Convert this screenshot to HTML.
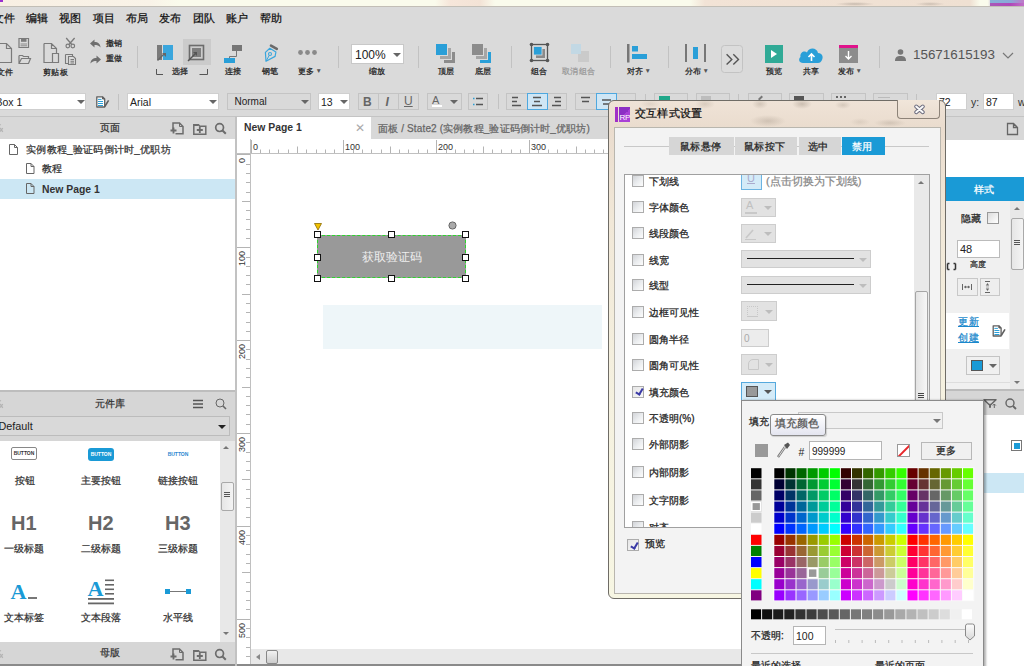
<!DOCTYPE html>
<html><head><meta charset="utf-8"><style>
*{margin:0;padding:0;box-sizing:border-box}
body{width:1024px;height:666px;overflow:hidden;position:relative;background:#dadada;font-family:"Liberation Sans",sans-serif;font-size:12px;color:#333}
.a{position:absolute}
.t{position:absolute;white-space:nowrap;line-height:1;-webkit-text-stroke:0.25px currentColor}
.inp{position:absolute;background:#fff;border:1px solid #cfcfcf}
.btn{position:absolute;border:1px solid #c4c4c4;background:#d9d9d9}
.sep{position:absolute;width:1px;background:#c2c2c2}
.lbl{position:absolute;white-space:nowrap;font-size:8px;letter-spacing:0.45px;line-height:1;color:#222;text-align:center;-webkit-text-stroke:0.25px currentColor}
.dd{position:absolute;width:0;height:0;border-left:4px solid transparent;border-right:4px solid transparent;border-top:4px solid #666}
</style></head><body>
<!-- top strip -->
<div class="a" style="left:0;top:0;width:1024px;height:7px;background:linear-gradient(90deg,#f8efe3 0,#f9f3e8 150px,#fafbec 180px,#fafbec 435px,#f6e6da 450px,#f3e3d6 480px,#fafbec 495px,#fafbec 690px,#f2e3d6 705px,#efe0d2 970px,#fafbec 980px,#fafbec 988px,#a090c8 995px,#9a7cc8 1024px)"></div>
<div class="a" style="left:990px;top:0;width:34px;height:3px;background:linear-gradient(90deg,#88b0d8,#8aa8d8 60%,#c078c8)"></div>
<div class="a" style="left:990px;top:3px;width:34px;height:3px;background:linear-gradient(90deg,#a858b8,#b048b8 60%,#c070c8)"></div>
<div class="a" style="left:835px;top:2px;width:40px;height:4px;background:radial-gradient(ellipse at center,rgba(120,110,100,.35),transparent 70%)"></div>
<div class="a" style="left:915px;top:2px;width:30px;height:4px;background:radial-gradient(ellipse at center,rgba(120,110,100,.3),transparent 70%)"></div>
<div class="a" style="left:0;top:0;width:3px;height:2px;background:#9a2fd0"></div>
<div class="a" style="left:0;top:6px;width:1024px;height:1px;background:#c2beb6"></div>

<!-- menu -->
<div class="t" style="left:-7.2px;top:12.7px;font-size:11px;color:#111">文件</div>
<div class="t" style="left:26.1px;top:12.7px;font-size:11px;color:#111">编辑</div>
<div class="t" style="left:59px;top:12.7px;font-size:11px;color:#111">视图</div>
<div class="t" style="left:92.9px;top:12.7px;font-size:11px;color:#111">项目</div>
<div class="t" style="left:126.1px;top:12.7px;font-size:11px;color:#111">布局</div>
<div class="t" style="left:159.3px;top:12.7px;font-size:11px;color:#111">发布</div>
<div class="t" style="left:193.1px;top:12.7px;font-size:11px;color:#111">团队</div>
<div class="t" style="left:226.1px;top:12.7px;font-size:11px;color:#111">账户</div>
<div class="t" style="left:259.5px;top:12.7px;font-size:11px;color:#111">帮助</div>


<!-- toolbar -->
<svg class="a" style="left:0;top:35px" width="1024" height="53" viewBox="0 35 1024 53">
 <g fill="none" stroke="#7a7a7a" stroke-width="1">
  <!-- file page -->
  <path d="M-3.5 43.5 H6.5 L11.5 48.5 V62.5 H-3.5 Z M6.5 43.5 V48.5 H11.5" stroke-width="1.2"/>
  <!-- save -->
  <path d="M19 38.5 H28.5 V47.5 H19 Z" stroke-width="1.2"/>
  <path d="M21 39 H26.5 V41.8 H21 Z" fill="#7a7a7a" stroke="none"/>
  <path d="M20.5 44 H27 M20.5 45.8 H27" stroke="#8a8a8a" stroke-width="1"/>
  <!-- open -->
  <path d="M19 55.5 H22.5 L23.5 56.5 H28.5 V58.5 M19 55.5 V63.5 H28.5 L30.5 58.5 H21.5 L19 63.5" stroke-width="1.2"/>
  <!-- paste -->
  <path d="M44 43.5 H51.5 L56.5 48.5 V53.5 M51.5 43.5 V48.5 H56.5 M44 43.5 V62.5 H52.5 M52.5 53.5 H58.5 V62.5 H52.5 Z" stroke-width="1.2"/>
  <!-- cut -->
  <circle cx="67.8" cy="46" r="1.8" stroke-width="1.2"/><circle cx="72.8" cy="46" r="1.8" stroke-width="1.2"/>
  <path d="M66.2 38 L71.8 44.5 M74.6 38 L69 44.5" stroke-width="1.3"/>
  <!-- copy -->
  <path d="M65.5 54.5 H72.5 V56.5 M65.5 54.5 V63.5 H68.5 M68.5 56.5 H73.5 L75.5 58.5 V64.5 H68.5 Z M70.5 59.5 H74 M70.5 61.2 H74 M70.5 63 H74" stroke-width="1.1"/>
 </g>
 <!-- undo / redo -->
 <path d="M90 43.5 L94.5 39.5 V42 C98 42 100.5 44 100.5 47.5 C99 45.5 97 45 94.5 45 V47.5 Z" fill="#6f6f6f"/>
 <path d="M101 59.5 L96.5 55.5 V58 C93 58 90.5 60 90.5 63.5 C92 61.5 94 61 96.5 61 V63.5 Z" fill="#6f6f6f"/>
 <!-- select 1 -->
 <rect x="157" y="45" width="5" height="15" fill="#7a7a7a"/>
 <rect x="163" y="45" width="10" height="15" fill="#3aa6dd"/>
 <path d="M157.5 60.5 L164 54" stroke="#666" stroke-width="1.5"/>
 <path d="M162 53 H166 V57 Z" fill="#666"/>
 <!-- select 2 bg -->
 <rect x="183" y="39" width="28" height="26" fill="#cbcbcb"/>
 <rect x="189.5" y="45.5" width="14" height="14" fill="none" stroke="#6c6c6c" stroke-width="1.6"/>
 <rect x="192" y="48" width="9" height="9" fill="#7e7e7e"/>
 <path d="M188 61 L195 54" stroke="#555" stroke-width="1.5"/>
 <path d="M193 52 H197 V56 Z" fill="#555"/>
 <path d="M156.5 69 V74.5 H163 M207.5 69 V74.5 H199.5" fill="none" stroke="#555" stroke-width="1"/>
 <!-- connect -->
 <rect x="232" y="45" width="10" height="6" fill="#767676"/>
 <path d="M236.5 51 V56.5 H229.5 V58" stroke="#767676" stroke-width="1" fill="none"/>
 <rect x="224" y="58" width="11" height="5" fill="#2a9fd8"/>
 <!-- pen -->
 <path d="M271 45.6 L276.8 48.9" stroke="#6a6a6a" stroke-width="2.6" stroke-linecap="round"/>
 <path d="M269.8 48.3 L275.9 52.1 L275.1 56.4 L266 61.3 L265.4 52.4 Z" fill="none" stroke="#3aa6dd" stroke-width="1.2" stroke-linejoin="round"/>
 <circle cx="270" cy="54" r="1.5" fill="none" stroke="#3aa6dd" stroke-width="1.1"/>
 <path d="M266.2 61 L269.2 55.4" stroke="#3aa6dd" stroke-width="1"/>
 <!-- dots -->
 <circle cx="300.5" cy="52.5" r="2.4" fill="#8a8a8a"/><circle cx="307.5" cy="52.5" r="2.4" fill="#8a8a8a"/><circle cx="314.5" cy="52.5" r="2.4" fill="#8a8a8a"/>
 <!-- top layer -->
 <rect x="444" y="52" width="11" height="11" fill="#8c8c8c"/>
 <rect x="439.5" y="47.5" width="12" height="12" fill="#a6a6a6" stroke="#dadada" stroke-width="1"/>
 <rect x="435.5" y="43.5" width="12" height="12" fill="#2a9fd8" stroke="#dadada" stroke-width="1"/>
 <!-- bottom layer -->
 <rect x="480" y="52" width="11" height="11" fill="#2a9fd8"/>
 <rect x="475.5" y="47.5" width="12" height="12" fill="#a6a6a6" stroke="#dadada" stroke-width="1"/>
 <rect x="471.5" y="43.5" width="12" height="12" fill="#8c8c8c" stroke="#dadada" stroke-width="1"/>
 <!-- group -->
 <rect x="531.5" y="44.5" width="16" height="16" fill="none" stroke="#555" stroke-width="1.3"/>
 <rect x="536" y="49" width="9" height="9" fill="#8a8a8a"/>
 <rect x="533.5" y="46.5" width="8.5" height="8.5" fill="#2a9fd8" stroke="#dadada" stroke-width="0.8"/>
 <circle cx="531.5" cy="44.5" r="1.8" fill="#555"/><circle cx="547.5" cy="44.5" r="1.8" fill="#555"/><circle cx="531.5" cy="60.5" r="1.8" fill="#555"/><circle cx="547.5" cy="60.5" r="1.8" fill="#555"/>
 <!-- ungroup -->
 <rect x="578" y="51" width="11" height="11" fill="#cacaca"/>
 <rect x="571" y="44" width="10" height="10" fill="#c2d8e4"/>
 <!-- align -->
 <rect x="627" y="44" width="2.5" height="18.5" fill="#777"/>
 <rect x="632" y="46" width="6" height="5.5" fill="#2a9fd8"/>
 <rect x="632" y="54" width="15" height="5" fill="#2a9fd8"/>
 <!-- distribute -->
 <rect x="685" y="44" width="2" height="18" fill="#777"/>
 <rect x="704" y="44" width="2" height="18" fill="#777"/>
 <rect x="693" y="47" width="5" height="12" fill="#2a9fd8"/>
 <!-- >> -->
 <rect x="721.5" y="45.5" width="21" height="27" rx="3" fill="#dcdcdc" stroke="#c3c3c3"/>
 <path d="M726.6 54.2 L731.8 59.4 L726.6 64.4 M733.3 54.2 L738.5 59.4 L733.3 64.4" fill="none" stroke="#555" stroke-width="1.4"/>
 <!-- preview -->
 <rect x="765" y="45" width="18" height="18" fill="#30aa96"/>
 <path d="M771 50 L777 54 L771 58 Z" fill="#fff"/>
 <!-- share cloud -->
 <path d="M803 63 C799 63 798 59 800.5 57 C799.5 52 805 50 807 52.5 C808.5 47 817 47 818 53 C822.5 53 823.5 57 822 60 C821 62 820 63 818 63 Z" fill="#2a9fd8"/>
 <path d="M811.5 61 V54 M808.5 57 L811.5 54 L814.5 57" fill="none" stroke="#fff" stroke-width="1.6"/>
 <!-- publish -->
 <rect x="839" y="45" width="19" height="3" fill="#e0138c"/>
 <rect x="839" y="48" width="19" height="15" fill="#8c8c8c"/>
 <path d="M848.5 51 V59 M845.5 56 L848.5 59 L851.5 56" fill="none" stroke="#fff" stroke-width="1.4"/>
 <!-- user -->
 <circle cx="900.5" cy="52" r="2.8" fill="#777"/>
 <path d="M895 61 C895 57 897 56 900.5 56 C904 56 906 57 906 61 Z" fill="#777"/>
 <path d="M1003 53 L1008 58 L1013 53" fill="none" stroke="#777" stroke-width="1.2"/>
</svg>
<div class="sep" style="left:137px;top:46px;height:22px"></div>
<div class="sep" style="left:338px;top:46px;height:22px"></div>
<div class="sep" style="left:418px;top:46px;height:22px"></div>
<div class="sep" style="left:511px;top:46px;height:22px"></div>
<div class="sep" style="left:610px;top:46px;height:22px"></div>
<div class="sep" style="left:668px;top:46px;height:22px"></div>
<div class="sep" style="left:879px;top:46px;height:22px"></div>
<div class="lbl" style="left:-3.5px;top:68.7px">文件</div>
<div class="lbl" style="left:42.7px;top:68.7px">剪贴板</div>
<div class="lbl" style="left:105.5px;top:39.8px">撤销</div>
<div class="lbl" style="left:105.5px;top:55.3px">重做</div>
<div class="lbl" style="left:172px;top:67.5px">选择</div>
<div class="lbl" style="left:225px;top:67.5px">连接</div>
<div class="lbl" style="left:262px;top:67.5px">钢笔</div>
<div class="lbl" style="left:298px;top:67.5px">更多<span style="font-size:6.5px;-webkit-text-stroke:0;color:#555;margin-left:0.5px;position:relative;top:-0.5px">▼</span></div>
<div class="inp" style="left:351px;top:44px;width:53px;height:20px;border-color:#c8c8c8"></div>
<div class="t" style="left:355px;top:49px;font-size:12px;color:#222;-webkit-text-stroke:0">100%</div>
<div class="dd" style="left:393px;top:53px"></div>
<div class="lbl" style="left:369px;top:67.5px">缩放</div>
<div class="lbl" style="left:438px;top:67.5px">顶层</div>
<div class="lbl" style="left:475px;top:67.5px">底层</div>
<div class="lbl" style="left:531px;top:67.5px">组合</div>
<div class="lbl" style="left:562px;top:68px;color:#999">取消组合</div>
<div class="lbl" style="left:627px;top:67.5px">对齐<span style="font-size:6.5px;-webkit-text-stroke:0;color:#555;margin-left:0.5px;position:relative;top:-0.5px">▼</span></div>
<div class="lbl" style="left:685px;top:67.5px">分布<span style="font-size:6.5px;-webkit-text-stroke:0;color:#555;margin-left:0.5px;position:relative;top:-0.5px">▼</span></div>
<div class="lbl" style="left:766px;top:67.5px">预览</div>
<div class="lbl" style="left:803px;top:67.5px">共享</div>
<div class="lbl" style="left:838px;top:67.5px">发布<span style="font-size:6.5px;-webkit-text-stroke:0;color:#555;margin-left:0.5px;position:relative;top:-0.5px">▼</span></div>
<div class="t" style="left:913px;top:48px;font-size:13.4px;color:#555;-webkit-text-stroke:0">15671615193</div>



<svg class="a" style="left:94px;top:94px" width="18" height="16" viewBox="94 94 18 16">
 <path d="M96.8 96.8 H102.5 L104.7 99 V107 H96.8 Z" fill="#fff" stroke="#5f5f5f" stroke-width="1.3" stroke-linejoin="round"/>
 <path d="M102.5 96.8 V99 H104.7" fill="#5f5f5f" stroke="#5f5f5f" stroke-width="1"/>
 <path d="M98 99.4 H101.5 M98 101.5 H103 M98 103.5 H103 M98 105.5 H103" stroke="#2a9fd8" stroke-width="1"/>
 <path d="M104.8 106.5 L108.6 100.3" stroke="#5f5f5f" stroke-width="1.6"/>
</svg>
<div class="sep" style="left:118px;top:94px;height:16px"></div>

<!-- format buttons -->
<div class="btn" style="left:358px;top:93px;width:61px;height:17px;background:#d9d9d9"></div>
<div class="a" style="left:378px;top:94px;width:1px;height:15px;background:#c4c4c4"></div>
<div class="a" style="left:398px;top:94px;width:1px;height:15px;background:#c4c4c4"></div>
<div class="t" style="left:363px;top:96px;font-size:12px;color:#666;font-weight:bold;-webkit-text-stroke:0">B</div>
<div class="t" style="left:385.5px;top:96px;font-size:12px;color:#666;font-style:italic;font-weight:bold;-webkit-text-stroke:0">I</div>
<div class="t" style="left:404px;top:95px;font-size:12px;color:#666;text-decoration:underline;-webkit-text-stroke:0">U</div>
<div class="btn" style="left:427px;top:93px;width:35px;height:17px"></div>
<div class="t" style="left:432px;top:95px;font-size:11px;color:#666;-webkit-text-stroke:0">A</div>
<div class="a" style="left:432px;top:105px;width:10px;height:2px;background:#fff"></div>
<div class="dd" style="left:450px;top:100px"></div>
<div class="btn" style="left:468px;top:93px;width:20px;height:17px"></div>
<svg class="a" style="left:468px;top:93px" width="20" height="17"><path d="M5 5.5 H6.5 M5 11.5 H6.5" stroke="#2a9fd8" stroke-width="1.6"/><path d="M8 5.5 H15 M8 11.5 H15" stroke="#555" stroke-width="1.4"/></svg>
<div class="sep" style="left:498px;top:94px;height:15px"></div>
<div class="btn" style="left:506px;top:93px;width:61px;height:17px"></div>
<div class="a" style="left:527px;top:93px;width:21px;height:17px;background:#cfe6f5;border:1px solid #4fa8df"></div>
<svg class="a" style="left:506px;top:93px" width="62" height="17">
 <path d="M6 4.5 H12 M6 8.5 H11 M6 12.5 H15" stroke="#555" stroke-width="1.3"/>
 <path d="M27 4.5 H35 M28 8.5 H34 M26 12.5 H36" stroke="#555" stroke-width="1.3"/>
 <path d="M48 4.5 H55 M49 8.5 H55 M46 12.5 H55" stroke="#555" stroke-width="1.3"/>
</svg>
<div class="btn" style="left:575px;top:93px;width:61px;height:17px"></div>
<div class="a" style="left:596px;top:93px;width:21px;height:17px;background:#cfe6f5;border:1px solid #4fa8df"></div>
<svg class="a" style="left:575px;top:93px" width="62" height="17">
 <path d="M6 4.5 H15 M7 8.5 H14" stroke="#555" stroke-width="1.3"/>
 <path d="M27 7 H36 M28 11 H35" stroke="#555" stroke-width="1.3"/>
</svg>
<div class="sep" style="left:645px;top:94px;height:15px"></div>
<div class="btn" style="left:654px;top:93px;width:34px;height:17px"></div>
<div class="a" style="left:659px;top:96px;width:11px;height:8px;background:#20a88a"></div>
<div class="btn" style="left:696px;top:93px;width:34px;height:17px"></div>
<div class="a" style="left:701px;top:96px;width:10px;height:8px;background:#bdbdbd"></div>
<div class="sep" style="left:738px;top:94px;height:15px"></div>
<div class="btn" style="left:748px;top:93px;width:34px;height:17px"></div>
<div class="a" style="left:758px;top:97px;width:5px;height:2px;background:#777;transform:rotate(-45deg)"></div>
<div class="btn" style="left:789px;top:93px;width:35px;height:17px"></div>
<div class="a" style="left:794px;top:96px;width:10px;height:5px;background:#555"></div>
<div class="btn" style="left:831px;top:93px;width:35px;height:17px"></div>
<div class="a" style="left:836px;top:96px;width:2px;height:2px;background:#666;box-shadow:4px 0 0 #666,8px 0 0 #666"></div>
<div class="btn" style="left:873px;top:93px;width:35px;height:17px"></div>
<div class="a" style="left:878px;top:97px;width:12px;height:1px;background:#bbb"></div>
<div class="sep" style="left:916px;top:94px;height:15px"></div>

<!-- toolbar line bottom -->
<div class="inp" style="left:936px;top:93px;width:31px;height:17px"></div>
<div class="t" style="left:939px;top:97px;font-size:10.5px;color:#222;-webkit-text-stroke:0">72</div>
<div class="t" style="left:971px;top:97px;font-size:10.5px;color:#333;-webkit-text-stroke:0">y:</div>
<div class="inp" style="left:983px;top:93px;width:31px;height:17px"></div>
<div class="t" style="left:986px;top:97px;font-size:10.5px;color:#222;-webkit-text-stroke:0">87</div>
<div class="t" style="left:1018px;top:97px;font-size:10.5px;color:#333;-webkit-text-stroke:0">w</div>


<div class="a" style="left:0;top:116px;width:1024px;height:1px;background:#c4c4c4"></div>

<!-- format bar -->
<div class="inp" style="left:-2px;top:93px;width:88px;height:17px"></div>
<div class="t" style="left:-4.5px;top:96.5px;font-size:10.5px;color:#222;-webkit-text-stroke:0">Box 1</div>
<div class="dd" style="left:77px;top:100px"></div>
<div class="inp" style="left:127px;top:93px;width:92px;height:17px"></div>
<div class="t" style="left:130px;top:96.5px;font-size:10.5px;color:#222;-webkit-text-stroke:0">Arial</div>
<div class="dd" style="left:209px;top:100px"></div>
<div class="btn" style="left:227px;top:93px;width:84px;height:17px"></div>
<div class="t" style="left:234.5px;top:96.5px;font-size:10px;color:#222;-webkit-text-stroke:0">Normal</div>
<div class="dd" style="left:301px;top:100px"></div>
<div class="inp" style="left:318px;top:93px;width:32px;height:17px"></div>
<div class="t" style="left:321px;top:96.5px;font-size:10.5px;color:#222;-webkit-text-stroke:0">13</div>
<div class="dd" style="left:340px;top:100px"></div>



<!-- CANVAS -->
<div class="a" style="left:237px;top:117px;width:709px;height:22px;background:#d8d8d8"></div>
<div class="a" style="left:236px;top:117px;width:135px;height:23px;background:#fff"></div>
<div class="t" style="left:244px;top:123px;font-size:10.4px;color:#333;font-weight:bold;-webkit-text-stroke:0">New Page 1</div>
<div class="t" style="left:355px;top:122px;font-size:12px;color:#aaa;-webkit-text-stroke:0">✕</div>
<div class="t" style="left:378px;top:124px;font-size:10px;color:#666;letter-spacing:0.14px">面板 / State2 (实例教程_验证码倒计时_优职坊)</div>
<div class="a" style="left:236px;top:139px;width:710px;height:525px;background:#fff"></div>
<svg class="a" style="left:0;top:0" width="946" height="666" viewBox="0 0 946 666">
 <path d="M250.5 139 V153 M236 153.5 H946 M250.5 153 V664" stroke="#c0c0c0" fill="none"/>
 <path d="M246 656.5 H250" stroke="#b4b4b4"/>
 <path d="M251.5 140 V153" stroke="#b4b4b4"/>
 <text x="253" y="149.5" font-size="9" fill="#333" font-family="Liberation Sans">0</text>
 <path d="M260.5 149.5 V153" stroke="#b4b4b4"/>
 <path d="M269.5 149.5 V153" stroke="#b4b4b4"/>
 <path d="M278.5 149.5 V153" stroke="#b4b4b4"/>
 <path d="M288.5 149.5 V153" stroke="#b4b4b4"/>
 <path d="M297.5 146.5 V153" stroke="#b4b4b4"/>
 <path d="M306.5 149.5 V153" stroke="#b4b4b4"/>
 <path d="M316.5 149.5 V153" stroke="#b4b4b4"/>
 <path d="M325.5 149.5 V153" stroke="#b4b4b4"/>
 <path d="M334.5 149.5 V153" stroke="#b4b4b4"/>
 <path d="M343.5 140 V153" stroke="#b4b4b4"/>
 <text x="345" y="149.5" font-size="9" fill="#333" font-family="Liberation Sans">100</text>
 <path d="M353.5 149.5 V153" stroke="#b4b4b4"/>
 <path d="M362.5 149.5 V153" stroke="#b4b4b4"/>
 <path d="M371.5 149.5 V153" stroke="#b4b4b4"/>
 <path d="M381.5 149.5 V153" stroke="#b4b4b4"/>
 <path d="M390.5 146.5 V153" stroke="#b4b4b4"/>
 <path d="M399.5 149.5 V153" stroke="#b4b4b4"/>
 <path d="M408.5 149.5 V153" stroke="#b4b4b4"/>
 <path d="M418.5 149.5 V153" stroke="#b4b4b4"/>
 <path d="M427.5 149.5 V153" stroke="#b4b4b4"/>
 <path d="M436.5 140 V153" stroke="#b4b4b4"/>
 <text x="438" y="149.5" font-size="9" fill="#333" font-family="Liberation Sans">200</text>
 <path d="M446.5 149.5 V153" stroke="#b4b4b4"/>
 <path d="M455.5 149.5 V153" stroke="#b4b4b4"/>
 <path d="M464.5 149.5 V153" stroke="#b4b4b4"/>
 <path d="M473.5 149.5 V153" stroke="#b4b4b4"/>
 <path d="M483.5 146.5 V153" stroke="#b4b4b4"/>
 <path d="M492.5 149.5 V153" stroke="#b4b4b4"/>
 <path d="M501.5 149.5 V153" stroke="#b4b4b4"/>
 <path d="M511.5 149.5 V153" stroke="#b4b4b4"/>
 <path d="M520.5 149.5 V153" stroke="#b4b4b4"/>
 <path d="M529.5 140 V153" stroke="#b4b4b4"/>
 <text x="531" y="149.5" font-size="9" fill="#333" font-family="Liberation Sans">300</text>
 <path d="M538.5 149.5 V153" stroke="#b4b4b4"/>
 <path d="M548.5 149.5 V153" stroke="#b4b4b4"/>
 <path d="M557.5 149.5 V153" stroke="#b4b4b4"/>
 <path d="M566.5 149.5 V153" stroke="#b4b4b4"/>
 <path d="M576.5 146.5 V153" stroke="#b4b4b4"/>
 <path d="M585.5 149.5 V153" stroke="#b4b4b4"/>
 <path d="M594.5 149.5 V153" stroke="#b4b4b4"/>
 <path d="M603.5 149.5 V153" stroke="#b4b4b4"/>
 <path d="M236 154.5 H250" stroke="#b4b4b4"/>
 <text transform="translate(245,158) rotate(-90)" text-anchor="end" font-size="9" fill="#333" font-family="Liberation Sans">0</text>
 <path d="M246 164.5 H250" stroke="#b4b4b4"/>
 <path d="M246 173.5 H250" stroke="#b4b4b4"/>
 <path d="M246 182.5 H250" stroke="#b4b4b4"/>
 <path d="M246 192.5 H250" stroke="#b4b4b4"/>
 <path d="M242 201.5 H250" stroke="#b4b4b4"/>
 <path d="M246 210.5 H250" stroke="#b4b4b4"/>
 <path d="M246 219.5 H250" stroke="#b4b4b4"/>
 <path d="M246 229.5 H250" stroke="#b4b4b4"/>
 <path d="M246 238.5 H250" stroke="#b4b4b4"/>
 <path d="M236 247.5 H250" stroke="#b4b4b4"/>
 <text transform="translate(245,251) rotate(-90)" text-anchor="end" font-size="9" fill="#333" font-family="Liberation Sans">100</text>
 <path d="M246 257.5 H250" stroke="#b4b4b4"/>
 <path d="M246 266.5 H250" stroke="#b4b4b4"/>
 <path d="M246 275.5 H250" stroke="#b4b4b4"/>
 <path d="M246 284.5 H250" stroke="#b4b4b4"/>
 <path d="M242 294.5 H250" stroke="#b4b4b4"/>
 <path d="M246 303.5 H250" stroke="#b4b4b4"/>
 <path d="M246 312.5 H250" stroke="#b4b4b4"/>
 <path d="M246 322.5 H250" stroke="#b4b4b4"/>
 <path d="M246 331.5 H250" stroke="#b4b4b4"/>
 <path d="M236 340.5 H250" stroke="#b4b4b4"/>
 <text transform="translate(245,344) rotate(-90)" text-anchor="end" font-size="9" fill="#333" font-family="Liberation Sans">200</text>
 <path d="M246 349.5 H250" stroke="#b4b4b4"/>
 <path d="M246 359.5 H250" stroke="#b4b4b4"/>
 <path d="M246 368.5 H250" stroke="#b4b4b4"/>
 <path d="M246 377.5 H250" stroke="#b4b4b4"/>
 <path d="M242 387.5 H250" stroke="#b4b4b4"/>
 <path d="M246 396.5 H250" stroke="#b4b4b4"/>
 <path d="M246 405.5 H250" stroke="#b4b4b4"/>
 <path d="M246 414.5 H250" stroke="#b4b4b4"/>
 <path d="M246 424.5 H250" stroke="#b4b4b4"/>
 <path d="M236 433.5 H250" stroke="#b4b4b4"/>
 <text transform="translate(245,437) rotate(-90)" text-anchor="end" font-size="9" fill="#333" font-family="Liberation Sans">300</text>
 <path d="M246 442.5 H250" stroke="#b4b4b4"/>
 <path d="M246 452.5 H250" stroke="#b4b4b4"/>
 <path d="M246 461.5 H250" stroke="#b4b4b4"/>
 <path d="M246 470.5 H250" stroke="#b4b4b4"/>
 <path d="M242 479.5 H250" stroke="#b4b4b4"/>
 <path d="M246 489.5 H250" stroke="#b4b4b4"/>
 <path d="M246 498.5 H250" stroke="#b4b4b4"/>
 <path d="M246 507.5 H250" stroke="#b4b4b4"/>
 <path d="M246 517.5 H250" stroke="#b4b4b4"/>
 <path d="M236 526.5 H250" stroke="#b4b4b4"/>
 <text transform="translate(245,530) rotate(-90)" text-anchor="end" font-size="9" fill="#333" font-family="Liberation Sans">400</text>
 <path d="M246 535.5 H250" stroke="#b4b4b4"/>
 <path d="M246 544.5 H250" stroke="#b4b4b4"/>
 <path d="M246 554.5 H250" stroke="#b4b4b4"/>
 <path d="M246 563.5 H250" stroke="#b4b4b4"/>
 <path d="M242 572.5 H250" stroke="#b4b4b4"/>
 <path d="M246 582.5 H250" stroke="#b4b4b4"/>
 <path d="M246 591.5 H250" stroke="#b4b4b4"/>
 <path d="M246 600.5 H250" stroke="#b4b4b4"/>
 <path d="M246 609.5 H250" stroke="#b4b4b4"/>
 <path d="M236 619.5 H250" stroke="#b4b4b4"/>
 <text transform="translate(245,623) rotate(-90)" text-anchor="end" font-size="9" fill="#333" font-family="Liberation Sans">500</text>
 <path d="M246 628.5 H250" stroke="#b4b4b4"/>
 <path d="M246 637.5 H250" stroke="#b4b4b4"/>
 <path d="M246 647.5 H250" stroke="#b4b4b4"/>
</svg>
<div class="a" style="left:323px;top:305px;width:279px;height:44px;background:#eef6f9"></div>
<div class="a" style="left:317px;top:235px;width:149px;height:43px;background:#999;border:1px dashed #2bd62b"></div>
<div class="t" style="left:362px;top:251px;font-size:12px;color:#eee;-webkit-text-stroke:0">获取验证码</div>
<svg class="a" style="left:300px;top:215px" width="180" height="75" viewBox="300 215 180 75">
 <g fill="#fff" stroke="#111" stroke-width="1">
  <rect x="314.5" y="231.5" width="6" height="6"/><rect x="388.5" y="231.5" width="6" height="6"/><rect x="462.5" y="231.5" width="6" height="6"/>
  <rect x="314.5" y="254.5" width="6" height="6"/><rect x="462.5" y="254.5" width="6" height="6"/>
  <rect x="314.5" y="275.5" width="6" height="6"/><rect x="388.5" y="275.5" width="6" height="6"/><rect x="462.5" y="275.5" width="6" height="6"/>
 </g>
 <path d="M314.5 223.5 H321.5 L318 230 Z" fill="#f2c200" stroke="#8a6a00" stroke-width="0.8"/>
 <circle cx="452.5" cy="225.5" r="3.6" fill="#aaa" stroke="#666" stroke-width="1"/>
</svg>
<div class="a" style="left:251px;top:649px;width:695px;height:15px;background:#e8e8e8"></div>
<div class="a" style="left:256px;top:654px;width:0;height:0;border-top:3px solid transparent;border-bottom:3px solid transparent;border-right:4px solid #888"></div>
<div class="a" style="left:266px;top:650px;width:12px;height:14px;border:1px solid #888;border-radius:2px;background:linear-gradient(#f2f2f2,#ccc)"></div>

<!-- LEFT PANEL -->
<div class="a" style="left:0;top:117px;width:235px;height:22.5px;background:#d8d8d8"></div>
<div class="t" style="left:100px;top:123px;font-size:10px;color:#333">页面</div>
<div class="a" style="left:0;top:139px;width:235px;height:252px;background:#fff"></div>
<div class="a" style="left:0;top:179px;width:235px;height:20px;background:#cce7f4"></div>
<svg class="a" style="left:0;top:116px" width="236" height="90" viewBox="0 116 236 90">
 <g transform="translate(0,0)" fill="none" stroke="#6c6c6c" stroke-width="1.5">
  <path d="M173 131 V123 H179.5 L183 126.5 V133.8 H175.5"/>
  <path d="M179.5 123 V126.5 H183" stroke-width="1"/>
  <path d="M170.5 130.5 H176.5 M173.5 127.5 V133.5" stroke-width="1.8"/>
  <path d="M193.8 124.8 H198.5 L199.8 126.2 H205.8 V134.2 H193.8 Z"/>
  <path d="M193.8 125 H198.5" stroke-width="2"/>
  <path d="M196.8 130 H202.8 M199.8 127 V133" stroke-width="1.8"/>
  <circle cx="219.6" cy="127.6" r="3.9" stroke-width="1.7"/><path d="M222.5 130.5 L225.8 133.8" stroke-width="2"/>
 </g>
 <g fill="none" stroke="#666" stroke-width="1">
  <path d="M9.5 144.5 H14.5 L17.5 147.5 V154.5 H9.5 Z M14.5 144.5 V147.5 H17.5" />
  <path d="M26.5 163.5 H31 L34 166.5 V173.5 H26.5 Z M31 163.5 V166.5 H34" />
  <path d="M26.5 183.5 H31 L34 186.5 V193.5 H26.5 Z M31 183.5 V186.5 H34" />
 </g>
</svg>
<div class="t" style="left:26px;top:145px;font-size:10px;color:#333;letter-spacing:0.25px">实例教程_验证码倒计时_优职坊</div>
<div class="t" style="left:42px;top:164px;font-size:10px;color:#333;letter-spacing:0.25px">教程</div>
<div class="t" style="left:42px;top:185px;font-size:10.4px;color:#333;font-weight:bold;-webkit-text-stroke:0">New Page 1</div>
<div class="a" style="left:0;top:390px;width:236px;height:2px;background:#bdbdbd"></div>
<div class="a" style="left:0;top:392px;width:235px;height:49px;background:#d6d6d6"></div>
<div class="t" style="left:95px;top:399px;font-size:10px;color:#333">元件库</div>
<svg class="a" style="left:190px;top:396px" width="40" height="16">
 <path d="M3 4.5 H13 M3 8 H13 M3 11.5 H13" stroke="#555" stroke-width="1.4"/>
 <circle cx="30" cy="7" r="4" fill="none" stroke="#666"/><path d="M33 10 L36 13" stroke="#666" stroke-width="1.6"/>
</svg>
<div class="a" style="left:-1px;top:416px;width:231px;height:20px;background:#d9d9d9;border:1px solid #bcbcbc"></div>
<div class="t" style="left:-1.5px;top:421px;font-size:10.8px;color:#222;-webkit-text-stroke:0">Default</div>
<div class="a" style="left:218px;top:425px;width:0;height:0;border-left:4px solid transparent;border-right:4px solid transparent;border-top:4px solid #222"></div>
<div class="a" style="left:0;top:441px;width:220px;height:201px;background:#fff"></div>
<div class="a" style="left:220px;top:441px;width:15px;height:201px;background:#e8e8e8"></div>
<div class="a" style="left:223px;top:446px;width:0;height:0;border-left:3px solid transparent;border-right:3px solid transparent;border-bottom:3px solid #777"></div>
<div class="a" style="left:223px;top:632px;width:0;height:0;border-left:3px solid transparent;border-right:3px solid transparent;border-top:3px solid #777"></div>
<div class="a" style="left:221px;top:482px;width:13px;height:29px;background:linear-gradient(90deg,#e6e6e6,#f4f4f4);border:1px solid #a9a9a9;border-radius:2px"></div>
<div class="a" style="left:224px;top:492px;width:6px;height:1px;background:#555;box-shadow:0 2px 0 #555,0 4px 0 #555"></div>
<!-- widgets -->
<div class="a" style="left:11px;top:447px;width:26px;height:13px;border:1px solid #888;border-radius:2px;background:#fff;font-size:5px;line-height:11px;text-align:center;color:#333;font-weight:bold">BUTTON</div>
<div class="a" style="left:88px;top:448px;width:26px;height:13px;border-radius:3px;background:#1a9ad6;font-size:5px;line-height:13px;text-align:center;color:#fff;font-weight:bold">BUTTON</div>
<div class="a" style="left:165px;top:448px;width:26px;height:13px;font-size:5px;line-height:13px;text-align:center;color:#2a87d0;font-weight:bold">BUTTON</div>
<div class="t" style="left:15px;top:475.5px;font-size:10px;color:#333">按钮</div>
<div class="t" style="left:81px;top:475.5px;font-size:10px;color:#333">主要按钮</div>
<div class="t" style="left:158px;top:475.5px;font-size:10px;color:#333">链接按钮</div>
<div class="t" style="left:11px;top:513px;font-size:20px;color:#666;font-weight:bold;-webkit-text-stroke:0">H1</div>
<div class="t" style="left:88px;top:513px;font-size:20px;color:#666;font-weight:bold;-webkit-text-stroke:0">H2</div>
<div class="t" style="left:165px;top:513px;font-size:20px;color:#666;font-weight:bold;-webkit-text-stroke:0">H3</div>
<div class="t" style="left:4px;top:544px;font-size:10px;color:#333">一级标题</div>
<div class="t" style="left:81px;top:544px;font-size:10px;color:#333">二级标题</div>
<div class="t" style="left:158px;top:544px;font-size:10px;color:#333">三级标题</div>
<svg class="a" style="left:0;top:575px" width="220" height="35" viewBox="0 575 220 35">
 <text x="10.6" y="599" font-family="Liberation Serif" font-weight="bold" font-size="21" fill="#1a9ad6" textLength="16" lengthAdjust="spacingAndGlyphs">A</text>
 <rect x="28" y="597" width="9" height="2" fill="#777"/>
 <text x="87.6" y="595.5" font-family="Liberation Serif" font-weight="bold" font-size="20" fill="#1a9ad6" textLength="16" lengthAdjust="spacingAndGlyphs">A</text>
 <rect x="105" y="579.5" width="9" height="1.6" fill="#666"/><rect x="105" y="584" width="9" height="1.6" fill="#666"/><rect x="105" y="588.5" width="9" height="1.6" fill="#666"/><rect x="105" y="593" width="9" height="1.6" fill="#666"/>
 <rect x="88" y="598" width="26" height="1.8" fill="#666"/><rect x="88" y="602.5" width="26" height="1.8" fill="#666"/>
 <rect x="165" y="589" width="5" height="5" fill="#1a9ad6"/><rect x="186" y="589" width="5" height="5" fill="#1a9ad6"/>
 <rect x="170" y="591" width="16" height="1" fill="#777"/>
</svg>
<div class="t" style="left:4px;top:613px;font-size:10px;color:#333">文本标签</div>
<div class="t" style="left:81px;top:613px;font-size:10px;color:#333">文本段落</div>
<div class="t" style="left:163px;top:613px;font-size:10px;color:#333">水平线</div>
<div class="a" style="left:0;top:642px;width:235px;height:22px;background:#d6d6d6"></div>
<div class="t" style="left:100px;top:648px;font-size:10px;color:#333">母版</div>
<svg class="a" style="left:0;top:642px" width="236" height="22" viewBox="0 642 236 22">
 <g transform="translate(0,526)" fill="none" stroke="#6c6c6c" stroke-width="1.5">
  <path d="M173 131 V123 H179.5 L183 126.5 V133.8 H175.5"/>
  <path d="M179.5 123 V126.5 H183" stroke-width="1"/>
  <path d="M170.5 130.5 H176.5 M173.5 127.5 V133.5" stroke-width="1.8"/>
  <path d="M193.8 124.8 H198.5 L199.8 126.2 H205.8 V134.2 H193.8 Z"/>
  <path d="M193.8 125 H198.5" stroke-width="2"/>
  <path d="M196.8 130 H202.8 M199.8 127 V133" stroke-width="1.8"/>
  <circle cx="219.6" cy="127.6" r="3.9" stroke-width="1.7"/><path d="M222.5 130.5 L225.8 133.8" stroke-width="2"/>
 </g>
</svg>
<div class="a" style="left:0;top:664px;width:1024px;height:2px;background:#8a8a8a"></div>
<div class="a" style="left:235px;top:116px;width:2px;height:550px;background:#c2c2c2"></div>



<svg class="a" style="left:0;top:0" width="6" height="666" viewBox="0 0 6 666">
 <path d="M0 124.5 L0.8 125 M0 131.5 L2.8 128.2 M0 128 L2.8 131.8" stroke="#b4b4b4" stroke-width="1.3" fill="none"/>
 <path d="M0 400.5 L1 401 M0 407.5 L2.8 404.2 M0 404 L2.8 407.8" stroke="#b4b4b4" stroke-width="1.3" fill="none"/>
 <path d="M0 650.5 L1 651 M0 657.5 L2.8 654.2 M0 654 L2.8 657.8" stroke="#b4b4b4" stroke-width="1.3" fill="none"/>
</svg>
<!-- DIALOG -->
<style>
.chk{position:absolute;width:12px;height:12px;border:1px solid #acacac;background:linear-gradient(135deg,#d2d4d8,#eceef0 55%,#fdfdfd)}
.chk.on{background:linear-gradient(135deg,#e6e6e6,#f8f8f8)}
.chk.on:after{content:"";position:absolute;left:3.5px;top:0.5px;width:2.5px;height:6px;border:solid #3a3aa6;border-width:0 2px 2px 0;transform:rotate(30deg)}
.dis{position:absolute;background:#e2e2e2;border:1px solid #cdcdcd}
.ddg{position:absolute;width:0;height:0;border-left:4px solid transparent;border-right:4px solid transparent;border-top:4px solid #bdbdbd}
</style>
<div class="a" style="left:608px;top:100px;width:338px;height:499px;border:1px solid #6f6c66;border-radius:6px 6px 6px 6px;background:linear-gradient(180deg,#efe3d7 0px,#eadcce 26px,#f1e8d8 120px,#f5f1e0 300px,#f7f6e3 499px)"></div>
<div class="a" style="left:610px;top:101px;width:334px;height:26px;background:radial-gradient(ellipse 10px 5px at 95px 3px,rgba(110,95,80,0.18),transparent),radial-gradient(ellipse 8px 5px at 150px 3px,rgba(110,95,80,0.22),transparent),radial-gradient(ellipse 10px 5px at 192px 3px,rgba(110,95,80,0.28),transparent),radial-gradient(ellipse 8px 4px at 233px 4px,rgba(110,95,80,0.2),transparent),radial-gradient(ellipse 18px 6px at 158px 20px,rgba(110,95,80,0.22),transparent),radial-gradient(ellipse 16px 4px at 280px 22px,rgba(110,95,80,0.2),transparent),radial-gradient(ellipse 10px 4px at 40px 3px,rgba(110,95,80,0.12),transparent),radial-gradient(ellipse 10px 4px at 250px 21px,rgba(110,95,80,0.12),transparent)"></div>
<div class="a" style="left:897px;top:100px;width:43px;height:19px;border:1px solid #8d8378;border-top:none;border-radius:0 0 4px 4px;background:linear-gradient(#f1e6da,#e9dccf)"></div>
<svg class="a" style="left:912px;top:103px" width="16" height="13"><path d="M4.2 3.5 L10.8 9.2 M10.8 3.5 L4.2 9.2" stroke="#6b6b7d" stroke-width="4" stroke-linecap="round"/><path d="M4.2 3.5 L10.8 9.2 M10.8 3.5 L4.2 9.2" stroke="#fafafa" stroke-width="2" stroke-linecap="round"/></svg>
<div class="a" style="left:615px;top:107px;width:2.5px;height:15px;background:#a12fc7"></div>
<div class="a" style="left:618.5px;top:107px;width:11.5px;height:15px;background:linear-gradient(135deg,#8c2fc4 50%,#a940d6 50%)"></div>
<div class="t" style="left:619.5px;top:113.5px;font-size:8px;color:#fff;-webkit-text-stroke:0;letter-spacing:-0.2px">RP</div>
<div class="t" style="left:635px;top:108px;font-size:11px;color:#111;letter-spacing:0.2px">交互样式设置</div>
<div class="a" style="left:614px;top:127px;width:327px;height:467px;background:#f3f3f3;border:1px solid #b9b6ae"></div>
<div class="a" style="left:624px;top:146px;width:305px;height:1px;background:#c8c8c8"></div>
<div class="a" style="left:669px;top:137px;width:65px;height:18px;background:#d6d6d6"></div>
<div class="a" style="left:735px;top:137px;width:62px;height:18px;background:#d6d6d6"></div>
<div class="a" style="left:799px;top:137px;width:42px;height:18px;background:#d6d6d6"></div>
<div class="a" style="left:842px;top:137px;width:43px;height:18px;background:#1a9ad6"></div>
<div class="t" style="left:680px;top:141.5px;font-size:10px;color:#222;letter-spacing:0.3px">鼠标悬停</div>
<div class="t" style="left:744px;top:141.5px;font-size:10px;color:#222;letter-spacing:0.3px">鼠标按下</div>
<div class="t" style="left:808px;top:141.5px;font-size:10px;color:#222;letter-spacing:0.3px">选中</div>
<div class="t" style="left:852px;top:141.5px;font-size:10px;color:#fff;letter-spacing:0.3px">禁用</div>
<div class="a" style="left:624px;top:174px;width:306px;height:354px;background:#fff;border:1px solid #a0a0a0;overflow:hidden">
</div>
<div class="a" style="left:914px;top:175px;width:15px;height:352px;background:#e9e9e9"></div>
<div class="a" style="left:918px;top:181px;width:0;height:0;border-left:3px solid transparent;border-right:3px solid transparent;border-bottom:3px solid #777"></div>
<div class="a" style="left:915px;top:291px;width:13px;height:140px;background:linear-gradient(90deg,#e4e4e4,#f6f6f6);border:1px solid #a5a5a5;border-radius:2px"></div>
<div class="a" style="left:918px;top:393px;width:6px;height:1px;background:#444;box-shadow:0 2px 0 #444,0 4px 0 #444"></div>
<div class="a" style="left:0;top:0;width:1024px;height:666px;clip-path:inset(175px 110px 139px 625px)">
<div class="chk" style="left:632px;top:175px"></div>
<div class="t" style="left:649px;top:177.0px;font-size:10px;color:#222">下划线</div>
<div class="chk" style="left:632px;top:201.2px"></div>
<div class="t" style="left:649px;top:203.2px;font-size:10px;color:#222">字体颜色</div>
<div class="chk" style="left:632px;top:227.2px"></div>
<div class="t" style="left:649px;top:229.2px;font-size:10px;color:#222">线段颜色</div>
<div class="chk" style="left:632px;top:253.5px"></div>
<div class="t" style="left:649px;top:255.5px;font-size:10px;color:#222">线宽</div>
<div class="chk" style="left:632px;top:279.3px"></div>
<div class="t" style="left:649px;top:281.3px;font-size:10px;color:#222">线型</div>
<div class="chk" style="left:632px;top:306px"></div>
<div class="t" style="left:649px;top:308.0px;font-size:10px;color:#222">边框可见性</div>
<div class="chk" style="left:632px;top:332.9px"></div>
<div class="t" style="left:649px;top:334.9px;font-size:10px;color:#222">圆角半径</div>
<div class="chk" style="left:632px;top:358.7px"></div>
<div class="t" style="left:649px;top:360.7px;font-size:10px;color:#222">圆角可见性</div>
<div class="chk on" style="left:632px;top:385.6px"></div>
<div class="t" style="left:649px;top:387.6px;font-size:10px;color:#222">填充颜色</div>
<div class="chk" style="left:632px;top:412.1px"></div>
<div class="t" style="left:649px;top:414.1px;font-size:10px;color:#222">不透明(%)</div>
<div class="chk" style="left:632px;top:438px"></div>
<div class="t" style="left:649px;top:440.0px;font-size:10px;color:#222">外部阴影</div>
<div class="chk" style="left:632px;top:466px"></div>
<div class="t" style="left:649px;top:468.0px;font-size:10px;color:#222">内部阴影</div>
<div class="chk" style="left:632px;top:493.7px"></div>
<div class="t" style="left:649px;top:495.7px;font-size:10px;color:#222">文字阴影</div>
<div class="chk" style="left:632px;top:520.6px"></div>
<div class="t" style="left:649px;top:522.6px;font-size:10px;color:#222">对齐</div>
<div class="a" style="left:741px;top:170px;width:21px;height:20px;background:#d4ebf8;border:1px solid #6cb4e2;border-top:none"></div>
<div class="t" style="left:747px;top:173px;font-size:11px;color:#aac;text-decoration:underline;-webkit-text-stroke:0">U</div>
<div class="t" style="left:766px;top:176px;font-size:11px;color:#888">(点击切换为下划线)</div>
<div class="dis" style="left:741px;top:198px;width:35px;height:19px"></div>
<div class="t" style="left:746px;top:200px;font-size:11px;color:#c0c0c0;-webkit-text-stroke:0">A</div>
<div class="a" style="left:745px;top:212px;width:12px;height:2px;background:#c8c8c8"></div>
<div class="ddg" style="left:764px;top:206px"></div>
<div class="dis" style="left:741px;top:224px;width:35px;height:19px"></div>
<svg class="a" style="left:741px;top:224px" width="24" height="19"><path d="M5 14 L12 6" stroke="#c8c8c8" stroke-width="1.6"/><path d="M4 15.5 H15" stroke="#c8c8c8"/></svg>
<div class="ddg" style="left:764px;top:232px"></div>
<div class="dis" style="left:741px;top:250px;width:130px;height:18px"></div>
<div class="a" style="left:747px;top:258px;width:107px;height:1px;background:#222"></div>
<div class="ddg" style="left:859px;top:258px"></div>
<div class="dis" style="left:741px;top:276px;width:130px;height:18px"></div>
<div class="a" style="left:747px;top:284px;width:107px;height:1px;background:#222"></div>
<div class="ddg" style="left:859px;top:284px"></div>
<div class="dis" style="left:741px;top:301px;width:36px;height:20px"></div>
<div class="a" style="left:747px;top:306px;width:11px;height:11px;border:1px dotted #c8c8c8;border-bottom-style:solid"></div>
<div class="ddg" style="left:765px;top:310px"></div>
<div class="dis" style="left:741px;top:329px;width:28px;height:18px;background:#ececec"></div>
<div class="t" style="left:744px;top:334px;font-size:10px;color:#aaa;-webkit-text-stroke:0">0</div>
<div class="dis" style="left:741px;top:354px;width:36px;height:21px"></div>
<div class="a" style="left:748px;top:359px;width:11px;height:11px;border:1px solid #c8c8c8;border-radius:5px 0 0 0"></div>
<div class="ddg" style="left:765px;top:363px"></div>
<div class="a" style="left:741px;top:382px;width:35px;height:19px;background:#d4ebf8;border:1px solid #55a9dd"></div>
<div class="a" style="left:746px;top:386px;width:12px;height:11px;background:#999;border:1px solid #555"></div>
<div class="dd" style="left:764px;top:390px;border-top-color:#555"></div>
</div>
<div class="chk on" style="left:627px;top:539px"></div>
<div class="t" style="left:645px;top:539px;font-size:10px;color:#222">预览</div>

<!-- RIGHT PANEL -->
<div class="a" style="left:946px;top:117px;width:78px;height:23px;background:#d8d8d8"></div>
<svg class="a" style="left:1000px;top:118px" width="24" height="20" viewBox="1000 118 24 20">
 <path d="M1007.5 123.5 H1013.5 L1017.5 127.5 V134.5 H1007.5 Z M1013.5 123.5 V127.5 H1017.5" fill="none" stroke="#666" stroke-width="1.3"/>
</svg>
<div class="a" style="left:946px;top:140px;width:78px;height:37px;background:#fff"></div>
<div class="a" style="left:946px;top:177px;width:78px;height:24px;background:#1a9ad6"></div>
<div class="t" style="left:974px;top:185px;font-size:10px;color:#fff;letter-spacing:0.3px">样式</div>
<div class="a" style="left:946px;top:201px;width:64px;height:189px;background:#f0f0f0"></div>
<div class="a" style="left:1010px;top:201px;width:14px;height:189px;background:#e8e8e8"></div>
<div class="a" style="left:1014px;top:207px;width:0;height:0;border-left:3px solid transparent;border-right:3px solid transparent;border-bottom:3px solid #777"></div>
<div class="a" style="left:1014px;top:380.5px;width:0;height:0;border-left:3px solid transparent;border-right:3px solid transparent;border-top:3px solid #777"></div>
<div class="a" style="left:1011px;top:218px;width:13px;height:52px;background:linear-gradient(90deg,#e6e6e6,#f4f4f4);border:1px solid #a9a9a9;border-radius:2px"></div>
<div class="a" style="left:1014px;top:240px;width:6px;height:1px;background:#555;box-shadow:0 2px 0 #555,0 4px 0 #555"></div>
<div class="t" style="left:961px;top:214px;font-size:10px;color:#222">隐藏</div>
<div class="a" style="left:987px;top:212px;width:12px;height:12px;border:1px solid #999;background:linear-gradient(135deg,#dcdcdc,#fff)"></div>
<div class="inp" style="left:957px;top:240px;width:43px;height:18px;border-color:#bbb"></div>
<div class="t" style="left:960px;top:244px;font-size:11px;color:#222;-webkit-text-stroke:0">48</div>
<div class="t" style="left:970px;top:261px;font-size:8px;color:#333">高度</div>
<svg class="a" style="left:946px;top:260px" width="12" height="12"><path d="M1.5 3.5 V9.5 M1.5 3.5 H3.5 M1.5 9.5 H3.5 M9.5 3.5 V9.5 M9.5 3.5 H7.5 M9.5 9.5 H7.5" stroke="#333" stroke-width="1.5" fill="none"/></svg>
<div class="btn" style="left:957px;top:278px;width:20.5px;height:18px;background:#eeeeee;border-color:#c8c8c8"></div>
<div class="btn" style="left:979.5px;top:278px;width:20px;height:18px;background:#eeeeee;border-color:#c8c8c8"></div>
<svg class="a" style="left:957px;top:278px" width="50" height="18">
 <path d="M5.5 6 V12 M14.5 6 V12 M7.5 9 H12.5" stroke="#666" stroke-width="1" fill="none"/>
 <path d="M7 9 L9 7.5 V10.5 Z M13 9 L11 7.5 V10.5 Z" fill="#666"/>
 <path d="M28 3.5 H33 M28 14.5 H33" stroke="#666" stroke-width="1" fill="none"/><path d="M30.5 5 L28.8 7.5 H32.2 Z M30.5 13 L28.8 10.5 H32.2 Z" fill="#666"/><path d="M29 9 H32" stroke="#999" stroke-width="0.8"/>
</svg>
<div class="a" style="left:946px;top:312.5px;width:63px;height:36px;background:#fff"></div>
<div class="t" style="left:958px;top:317px;font-size:10px;color:#1a88cc;text-decoration:underline;letter-spacing:0.5px">更新</div>
<div class="t" style="left:958px;top:333px;font-size:10px;color:#1a88cc;text-decoration:underline;letter-spacing:0.5px">创建</div>
<svg class="a" style="left:990px;top:322px" width="18" height="17" viewBox="990 322 18 17">
 <g transform="translate(896.4,229)">
 <path d="M96.8 96.8 H102.5 L104.7 99 V107 H96.8 Z" fill="#fff" stroke="#5f5f5f" stroke-width="1.3" stroke-linejoin="round"/>
 <path d="M102.5 96.8 V99 H104.7" fill="#5f5f5f" stroke="#5f5f5f" stroke-width="1"/>
 <path d="M98 99.4 H101.5 M98 101.5 H103 M98 103.5 H103 M98 105.5 H103" stroke="#2a9fd8" stroke-width="1"/>
 <path d="M104.8 106.5 L108.6 100.3" stroke="#5f5f5f" stroke-width="1.6"/>
 </g>
</svg>
<div class="btn" style="left:966px;top:356px;width:34px;height:19px;background:#f0f0f0;border-color:#c4c4c4"></div>
<div class="a" style="left:971px;top:359.5px;width:12px;height:11.5px;background:#1a9ad6;border:1px solid #555"></div>
<div class="dd" style="left:989px;top:364px"></div>
<div class="a" style="left:946px;top:382px;width:64px;height:1px;background:#ddd"></div>
<div class="a" style="left:946px;top:389px;width:78px;height:2px;background:#bcbcbc"></div>
<div class="a" style="left:946px;top:391px;width:78px;height:24px;background:#d6d6d6"></div>
<svg class="a" style="left:980px;top:395px" width="44" height="18" viewBox="980 395 44 18">
 <path d="M984 399.8 H996 L991 404.5 H989 Z" fill="none" stroke="#666" stroke-width="1.5" stroke-linejoin="round"/>
 <path d="M990 404 V407.8" stroke="#666" stroke-width="2"/>
 <path d="M994.3 404 V408 M992.8 405.5 L994.3 404 L995.8 405.5" stroke="#666" stroke-width="1" fill="none"/>
 <circle cx="1010" cy="403" r="4" fill="none" stroke="#666" stroke-width="1.4"/><path d="M1013 406 L1016 409" stroke="#666" stroke-width="1.8"/>
</svg>
<div class="a" style="left:946px;top:415px;width:78px;height:251px;background:#fff"></div>
<div class="a" style="left:1011px;top:440px;width:11px;height:11px;border:1px solid #777;background:#fff"></div>
<div class="a" style="left:1014px;top:443px;width:6px;height:6px;background:#1a9ad6"></div>
<div class="a" style="left:946px;top:473px;width:78px;height:20px;background:#cce7f4"></div>

<!-- PICKER -->
<div class="a" style="left:741px;top:400px;width:243px;height:270px;background:#f3f3f3;border:1px solid #8a8a8a;box-shadow:2px 0 2px rgba(0,0,0,.3)"></div>
<div class="t" style="left:749px;top:417px;font-size:10px;color:#222">填充</div>
<div class="a" style="left:798px;top:412px;width:145px;height:17px;border:1px solid #c8c8c8;background:#f0f0f0"></div>
<div class="ddg" style="left:933px;top:419px;border-top-color:#777"></div>
<div class="a" style="left:770px;top:414px;width:56px;height:22px;border:1px solid #8a8a8a;border-radius:3px;background:linear-gradient(#fff,#e4e5f0);box-shadow:1px 1px 1px rgba(0,0,0,.15)"></div>
<div class="t" style="left:775px;top:418px;font-size:11px;color:#555">填充颜色</div>
<div class="a" style="left:755px;top:444px;width:13px;height:13px;background:#999"></div>
<svg class="a" style="left:775px;top:441px" width="16" height="18"><path d="M3 16 L10 6" stroke="#777" stroke-width="2.4"/><path d="M3.5 15.5 L10 6" stroke="#ddd" stroke-width="1"/><path d="M9 4 L13 1.5 L15 4 L12 8 Z" fill="#555"/></svg>
<div class="t" style="left:798.5px;top:446.5px;font-size:10.5px;color:#222;-webkit-text-stroke:0">#</div>
<div class="inp" style="left:809px;top:441px;width:73px;height:19px;border-color:#b5b5b5"></div>
<div class="t" style="left:812px;top:446.5px;font-size:10px;color:#222;-webkit-text-stroke:0">999999</div>
<div class="a" style="left:897px;top:444px;width:13px;height:13px;border:1px solid #999;background:#fff;overflow:hidden"><div class="a" style="left:-3px;top:5px;width:18px;height:1.6px;background:#e8282c;transform:rotate(-45deg)"></div></div>
<div class="a" style="left:921px;top:442px;width:51px;height:18px;border:1px solid #b8b8b8;background:#f0f0f0"></div>
<div class="t" style="left:936px;top:446px;font-size:10px;color:#222">更多</div>
<svg class="a" style="left:0;top:0" width="1024" height="666" viewBox="0 0 1024 666">
<rect x="773.3" y="467.2" width="201" height="134" fill="#fbfbfb"/>
<rect x="774.3" y="468.2" width="10.1" height="10.1" fill="#000000"/>
<rect x="785.4" y="468.2" width="10.1" height="10.1" fill="#003300"/>
<rect x="796.5" y="468.2" width="10.1" height="10.1" fill="#006600"/>
<rect x="807.6" y="468.2" width="10.1" height="10.1" fill="#009900"/>
<rect x="818.7" y="468.2" width="10.1" height="10.1" fill="#00CC00"/>
<rect x="829.8" y="468.2" width="10.1" height="10.1" fill="#00FF00"/>
<rect x="774.3" y="479.3" width="10.1" height="10.1" fill="#000033"/>
<rect x="785.4" y="479.3" width="10.1" height="10.1" fill="#003333"/>
<rect x="796.5" y="479.3" width="10.1" height="10.1" fill="#006633"/>
<rect x="807.6" y="479.3" width="10.1" height="10.1" fill="#009933"/>
<rect x="818.7" y="479.3" width="10.1" height="10.1" fill="#00CC33"/>
<rect x="829.8" y="479.3" width="10.1" height="10.1" fill="#00FF33"/>
<rect x="774.3" y="490.4" width="10.1" height="10.1" fill="#000066"/>
<rect x="785.4" y="490.4" width="10.1" height="10.1" fill="#003366"/>
<rect x="796.5" y="490.4" width="10.1" height="10.1" fill="#006666"/>
<rect x="807.6" y="490.4" width="10.1" height="10.1" fill="#009966"/>
<rect x="818.7" y="490.4" width="10.1" height="10.1" fill="#00CC66"/>
<rect x="829.8" y="490.4" width="10.1" height="10.1" fill="#00FF66"/>
<rect x="774.3" y="501.5" width="10.1" height="10.1" fill="#000099"/>
<rect x="785.4" y="501.5" width="10.1" height="10.1" fill="#003399"/>
<rect x="796.5" y="501.5" width="10.1" height="10.1" fill="#006699"/>
<rect x="807.6" y="501.5" width="10.1" height="10.1" fill="#009999"/>
<rect x="818.7" y="501.5" width="10.1" height="10.1" fill="#00CC99"/>
<rect x="829.8" y="501.5" width="10.1" height="10.1" fill="#00FF99"/>
<rect x="774.3" y="512.6" width="10.1" height="10.1" fill="#0000CC"/>
<rect x="785.4" y="512.6" width="10.1" height="10.1" fill="#0033CC"/>
<rect x="796.5" y="512.6" width="10.1" height="10.1" fill="#0066CC"/>
<rect x="807.6" y="512.6" width="10.1" height="10.1" fill="#0099CC"/>
<rect x="818.7" y="512.6" width="10.1" height="10.1" fill="#00CCCC"/>
<rect x="829.8" y="512.6" width="10.1" height="10.1" fill="#00FFCC"/>
<rect x="774.3" y="523.7" width="10.1" height="10.1" fill="#0000FF"/>
<rect x="785.4" y="523.7" width="10.1" height="10.1" fill="#0033FF"/>
<rect x="796.5" y="523.7" width="10.1" height="10.1" fill="#0066FF"/>
<rect x="807.6" y="523.7" width="10.1" height="10.1" fill="#0099FF"/>
<rect x="818.7" y="523.7" width="10.1" height="10.1" fill="#00CCFF"/>
<rect x="829.8" y="523.7" width="10.1" height="10.1" fill="#00FFFF"/>
<rect x="840.9" y="468.2" width="10.1" height="10.1" fill="#330000"/>
<rect x="852.0" y="468.2" width="10.1" height="10.1" fill="#333300"/>
<rect x="863.1" y="468.2" width="10.1" height="10.1" fill="#336600"/>
<rect x="874.2" y="468.2" width="10.1" height="10.1" fill="#339900"/>
<rect x="885.3" y="468.2" width="10.1" height="10.1" fill="#33CC00"/>
<rect x="896.4" y="468.2" width="10.1" height="10.1" fill="#33FF00"/>
<rect x="840.9" y="479.3" width="10.1" height="10.1" fill="#330033"/>
<rect x="852.0" y="479.3" width="10.1" height="10.1" fill="#333333"/>
<rect x="863.1" y="479.3" width="10.1" height="10.1" fill="#336633"/>
<rect x="874.2" y="479.3" width="10.1" height="10.1" fill="#339933"/>
<rect x="885.3" y="479.3" width="10.1" height="10.1" fill="#33CC33"/>
<rect x="896.4" y="479.3" width="10.1" height="10.1" fill="#33FF33"/>
<rect x="840.9" y="490.4" width="10.1" height="10.1" fill="#330066"/>
<rect x="852.0" y="490.4" width="10.1" height="10.1" fill="#333366"/>
<rect x="863.1" y="490.4" width="10.1" height="10.1" fill="#336666"/>
<rect x="874.2" y="490.4" width="10.1" height="10.1" fill="#339966"/>
<rect x="885.3" y="490.4" width="10.1" height="10.1" fill="#33CC66"/>
<rect x="896.4" y="490.4" width="10.1" height="10.1" fill="#33FF66"/>
<rect x="840.9" y="501.5" width="10.1" height="10.1" fill="#330099"/>
<rect x="852.0" y="501.5" width="10.1" height="10.1" fill="#333399"/>
<rect x="863.1" y="501.5" width="10.1" height="10.1" fill="#336699"/>
<rect x="874.2" y="501.5" width="10.1" height="10.1" fill="#339999"/>
<rect x="885.3" y="501.5" width="10.1" height="10.1" fill="#33CC99"/>
<rect x="896.4" y="501.5" width="10.1" height="10.1" fill="#33FF99"/>
<rect x="840.9" y="512.6" width="10.1" height="10.1" fill="#3300CC"/>
<rect x="852.0" y="512.6" width="10.1" height="10.1" fill="#3333CC"/>
<rect x="863.1" y="512.6" width="10.1" height="10.1" fill="#3366CC"/>
<rect x="874.2" y="512.6" width="10.1" height="10.1" fill="#3399CC"/>
<rect x="885.3" y="512.6" width="10.1" height="10.1" fill="#33CCCC"/>
<rect x="896.4" y="512.6" width="10.1" height="10.1" fill="#33FFCC"/>
<rect x="840.9" y="523.7" width="10.1" height="10.1" fill="#3300FF"/>
<rect x="852.0" y="523.7" width="10.1" height="10.1" fill="#3333FF"/>
<rect x="863.1" y="523.7" width="10.1" height="10.1" fill="#3366FF"/>
<rect x="874.2" y="523.7" width="10.1" height="10.1" fill="#3399FF"/>
<rect x="885.3" y="523.7" width="10.1" height="10.1" fill="#33CCFF"/>
<rect x="896.4" y="523.7" width="10.1" height="10.1" fill="#33FFFF"/>
<rect x="907.5" y="468.2" width="10.1" height="10.1" fill="#660000"/>
<rect x="918.6" y="468.2" width="10.1" height="10.1" fill="#663300"/>
<rect x="929.7" y="468.2" width="10.1" height="10.1" fill="#666600"/>
<rect x="940.8" y="468.2" width="10.1" height="10.1" fill="#669900"/>
<rect x="951.9" y="468.2" width="10.1" height="10.1" fill="#66CC00"/>
<rect x="963.0" y="468.2" width="10.1" height="10.1" fill="#66FF00"/>
<rect x="907.5" y="479.3" width="10.1" height="10.1" fill="#660033"/>
<rect x="918.6" y="479.3" width="10.1" height="10.1" fill="#663333"/>
<rect x="929.7" y="479.3" width="10.1" height="10.1" fill="#666633"/>
<rect x="940.8" y="479.3" width="10.1" height="10.1" fill="#669933"/>
<rect x="951.9" y="479.3" width="10.1" height="10.1" fill="#66CC33"/>
<rect x="963.0" y="479.3" width="10.1" height="10.1" fill="#66FF33"/>
<rect x="907.5" y="490.4" width="10.1" height="10.1" fill="#660066"/>
<rect x="918.6" y="490.4" width="10.1" height="10.1" fill="#663366"/>
<rect x="929.7" y="490.4" width="10.1" height="10.1" fill="#666666"/>
<rect x="940.8" y="490.4" width="10.1" height="10.1" fill="#669966"/>
<rect x="951.9" y="490.4" width="10.1" height="10.1" fill="#66CC66"/>
<rect x="963.0" y="490.4" width="10.1" height="10.1" fill="#66FF66"/>
<rect x="907.5" y="501.5" width="10.1" height="10.1" fill="#660099"/>
<rect x="918.6" y="501.5" width="10.1" height="10.1" fill="#663399"/>
<rect x="929.7" y="501.5" width="10.1" height="10.1" fill="#666699"/>
<rect x="940.8" y="501.5" width="10.1" height="10.1" fill="#669999"/>
<rect x="951.9" y="501.5" width="10.1" height="10.1" fill="#66CC99"/>
<rect x="963.0" y="501.5" width="10.1" height="10.1" fill="#66FF99"/>
<rect x="907.5" y="512.6" width="10.1" height="10.1" fill="#6600CC"/>
<rect x="918.6" y="512.6" width="10.1" height="10.1" fill="#6633CC"/>
<rect x="929.7" y="512.6" width="10.1" height="10.1" fill="#6666CC"/>
<rect x="940.8" y="512.6" width="10.1" height="10.1" fill="#6699CC"/>
<rect x="951.9" y="512.6" width="10.1" height="10.1" fill="#66CCCC"/>
<rect x="963.0" y="512.6" width="10.1" height="10.1" fill="#66FFCC"/>
<rect x="907.5" y="523.7" width="10.1" height="10.1" fill="#6600FF"/>
<rect x="918.6" y="523.7" width="10.1" height="10.1" fill="#6633FF"/>
<rect x="929.7" y="523.7" width="10.1" height="10.1" fill="#6666FF"/>
<rect x="940.8" y="523.7" width="10.1" height="10.1" fill="#6699FF"/>
<rect x="951.9" y="523.7" width="10.1" height="10.1" fill="#66CCFF"/>
<rect x="963.0" y="523.7" width="10.1" height="10.1" fill="#66FFFF"/>
<rect x="774.3" y="534.8" width="10.1" height="10.1" fill="#990000"/>
<rect x="785.4" y="534.8" width="10.1" height="10.1" fill="#993300"/>
<rect x="796.5" y="534.8" width="10.1" height="10.1" fill="#996600"/>
<rect x="807.6" y="534.8" width="10.1" height="10.1" fill="#999900"/>
<rect x="818.7" y="534.8" width="10.1" height="10.1" fill="#99CC00"/>
<rect x="829.8" y="534.8" width="10.1" height="10.1" fill="#99FF00"/>
<rect x="774.3" y="545.9" width="10.1" height="10.1" fill="#990033"/>
<rect x="785.4" y="545.9" width="10.1" height="10.1" fill="#993333"/>
<rect x="796.5" y="545.9" width="10.1" height="10.1" fill="#996633"/>
<rect x="807.6" y="545.9" width="10.1" height="10.1" fill="#999933"/>
<rect x="818.7" y="545.9" width="10.1" height="10.1" fill="#99CC33"/>
<rect x="829.8" y="545.9" width="10.1" height="10.1" fill="#99FF33"/>
<rect x="774.3" y="557.0" width="10.1" height="10.1" fill="#990066"/>
<rect x="785.4" y="557.0" width="10.1" height="10.1" fill="#993366"/>
<rect x="796.5" y="557.0" width="10.1" height="10.1" fill="#996666"/>
<rect x="807.6" y="557.0" width="10.1" height="10.1" fill="#999966"/>
<rect x="818.7" y="557.0" width="10.1" height="10.1" fill="#99CC66"/>
<rect x="829.8" y="557.0" width="10.1" height="10.1" fill="#99FF66"/>
<rect x="774.3" y="568.1" width="10.1" height="10.1" fill="#990099"/>
<rect x="785.4" y="568.1" width="10.1" height="10.1" fill="#993399"/>
<rect x="796.5" y="568.1" width="10.1" height="10.1" fill="#996699"/>
<rect x="807.6" y="568.1" width="10.1" height="10.1" fill="#999999"/>
<rect x="818.7" y="568.1" width="10.1" height="10.1" fill="#99CC99"/>
<rect x="829.8" y="568.1" width="10.1" height="10.1" fill="#99FF99"/>
<rect x="774.3" y="579.2" width="10.1" height="10.1" fill="#9900CC"/>
<rect x="785.4" y="579.2" width="10.1" height="10.1" fill="#9933CC"/>
<rect x="796.5" y="579.2" width="10.1" height="10.1" fill="#9966CC"/>
<rect x="807.6" y="579.2" width="10.1" height="10.1" fill="#9999CC"/>
<rect x="818.7" y="579.2" width="10.1" height="10.1" fill="#99CCCC"/>
<rect x="829.8" y="579.2" width="10.1" height="10.1" fill="#99FFCC"/>
<rect x="774.3" y="590.3" width="10.1" height="10.1" fill="#9900FF"/>
<rect x="785.4" y="590.3" width="10.1" height="10.1" fill="#9933FF"/>
<rect x="796.5" y="590.3" width="10.1" height="10.1" fill="#9966FF"/>
<rect x="807.6" y="590.3" width="10.1" height="10.1" fill="#9999FF"/>
<rect x="818.7" y="590.3" width="10.1" height="10.1" fill="#99CCFF"/>
<rect x="829.8" y="590.3" width="10.1" height="10.1" fill="#99FFFF"/>
<rect x="840.9" y="534.8" width="10.1" height="10.1" fill="#CC0000"/>
<rect x="852.0" y="534.8" width="10.1" height="10.1" fill="#CC3300"/>
<rect x="863.1" y="534.8" width="10.1" height="10.1" fill="#CC6600"/>
<rect x="874.2" y="534.8" width="10.1" height="10.1" fill="#CC9900"/>
<rect x="885.3" y="534.8" width="10.1" height="10.1" fill="#CCCC00"/>
<rect x="896.4" y="534.8" width="10.1" height="10.1" fill="#CCFF00"/>
<rect x="840.9" y="545.9" width="10.1" height="10.1" fill="#CC0033"/>
<rect x="852.0" y="545.9" width="10.1" height="10.1" fill="#CC3333"/>
<rect x="863.1" y="545.9" width="10.1" height="10.1" fill="#CC6633"/>
<rect x="874.2" y="545.9" width="10.1" height="10.1" fill="#CC9933"/>
<rect x="885.3" y="545.9" width="10.1" height="10.1" fill="#CCCC33"/>
<rect x="896.4" y="545.9" width="10.1" height="10.1" fill="#CCFF33"/>
<rect x="840.9" y="557.0" width="10.1" height="10.1" fill="#CC0066"/>
<rect x="852.0" y="557.0" width="10.1" height="10.1" fill="#CC3366"/>
<rect x="863.1" y="557.0" width="10.1" height="10.1" fill="#CC6666"/>
<rect x="874.2" y="557.0" width="10.1" height="10.1" fill="#CC9966"/>
<rect x="885.3" y="557.0" width="10.1" height="10.1" fill="#CCCC66"/>
<rect x="896.4" y="557.0" width="10.1" height="10.1" fill="#CCFF66"/>
<rect x="840.9" y="568.1" width="10.1" height="10.1" fill="#CC0099"/>
<rect x="852.0" y="568.1" width="10.1" height="10.1" fill="#CC3399"/>
<rect x="863.1" y="568.1" width="10.1" height="10.1" fill="#CC6699"/>
<rect x="874.2" y="568.1" width="10.1" height="10.1" fill="#CC9999"/>
<rect x="885.3" y="568.1" width="10.1" height="10.1" fill="#CCCC99"/>
<rect x="896.4" y="568.1" width="10.1" height="10.1" fill="#CCFF99"/>
<rect x="840.9" y="579.2" width="10.1" height="10.1" fill="#CC00CC"/>
<rect x="852.0" y="579.2" width="10.1" height="10.1" fill="#CC33CC"/>
<rect x="863.1" y="579.2" width="10.1" height="10.1" fill="#CC66CC"/>
<rect x="874.2" y="579.2" width="10.1" height="10.1" fill="#CC99CC"/>
<rect x="885.3" y="579.2" width="10.1" height="10.1" fill="#CCCCCC"/>
<rect x="896.4" y="579.2" width="10.1" height="10.1" fill="#CCFFCC"/>
<rect x="840.9" y="590.3" width="10.1" height="10.1" fill="#CC00FF"/>
<rect x="852.0" y="590.3" width="10.1" height="10.1" fill="#CC33FF"/>
<rect x="863.1" y="590.3" width="10.1" height="10.1" fill="#CC66FF"/>
<rect x="874.2" y="590.3" width="10.1" height="10.1" fill="#CC99FF"/>
<rect x="885.3" y="590.3" width="10.1" height="10.1" fill="#CCCCFF"/>
<rect x="896.4" y="590.3" width="10.1" height="10.1" fill="#CCFFFF"/>
<rect x="907.5" y="534.8" width="10.1" height="10.1" fill="#FF0000"/>
<rect x="918.6" y="534.8" width="10.1" height="10.1" fill="#FF3300"/>
<rect x="929.7" y="534.8" width="10.1" height="10.1" fill="#FF6600"/>
<rect x="940.8" y="534.8" width="10.1" height="10.1" fill="#FF9900"/>
<rect x="951.9" y="534.8" width="10.1" height="10.1" fill="#FFCC00"/>
<rect x="963.0" y="534.8" width="10.1" height="10.1" fill="#FFFF00"/>
<rect x="907.5" y="545.9" width="10.1" height="10.1" fill="#FF0033"/>
<rect x="918.6" y="545.9" width="10.1" height="10.1" fill="#FF3333"/>
<rect x="929.7" y="545.9" width="10.1" height="10.1" fill="#FF6633"/>
<rect x="940.8" y="545.9" width="10.1" height="10.1" fill="#FF9933"/>
<rect x="951.9" y="545.9" width="10.1" height="10.1" fill="#FFCC33"/>
<rect x="963.0" y="545.9" width="10.1" height="10.1" fill="#FFFF33"/>
<rect x="907.5" y="557.0" width="10.1" height="10.1" fill="#FF0066"/>
<rect x="918.6" y="557.0" width="10.1" height="10.1" fill="#FF3366"/>
<rect x="929.7" y="557.0" width="10.1" height="10.1" fill="#FF6666"/>
<rect x="940.8" y="557.0" width="10.1" height="10.1" fill="#FF9966"/>
<rect x="951.9" y="557.0" width="10.1" height="10.1" fill="#FFCC66"/>
<rect x="963.0" y="557.0" width="10.1" height="10.1" fill="#FFFF66"/>
<rect x="907.5" y="568.1" width="10.1" height="10.1" fill="#FF0099"/>
<rect x="918.6" y="568.1" width="10.1" height="10.1" fill="#FF3399"/>
<rect x="929.7" y="568.1" width="10.1" height="10.1" fill="#FF6699"/>
<rect x="940.8" y="568.1" width="10.1" height="10.1" fill="#FF9999"/>
<rect x="951.9" y="568.1" width="10.1" height="10.1" fill="#FFCC99"/>
<rect x="963.0" y="568.1" width="10.1" height="10.1" fill="#FFFF99"/>
<rect x="907.5" y="579.2" width="10.1" height="10.1" fill="#FF00CC"/>
<rect x="918.6" y="579.2" width="10.1" height="10.1" fill="#FF33CC"/>
<rect x="929.7" y="579.2" width="10.1" height="10.1" fill="#FF66CC"/>
<rect x="940.8" y="579.2" width="10.1" height="10.1" fill="#FF99CC"/>
<rect x="951.9" y="579.2" width="10.1" height="10.1" fill="#FFCCCC"/>
<rect x="963.0" y="579.2" width="10.1" height="10.1" fill="#FFFFCC"/>
<rect x="907.5" y="590.3" width="10.1" height="10.1" fill="#FF00FF"/>
<rect x="918.6" y="590.3" width="10.1" height="10.1" fill="#FF33FF"/>
<rect x="929.7" y="590.3" width="10.1" height="10.1" fill="#FF66FF"/>
<rect x="940.8" y="590.3" width="10.1" height="10.1" fill="#FF99FF"/>
<rect x="951.9" y="590.3" width="10.1" height="10.1" fill="#FFCCFF"/>
<rect x="963.0" y="590.3" width="10.1" height="10.1" fill="#FFFFFF"/>
<rect x="751" y="468.2" width="10.5" height="10.1" fill="#000000"/>
<rect x="751" y="479.3" width="10.5" height="10.1" fill="#333333"/>
<rect x="751" y="490.4" width="10.5" height="10.1" fill="#666666"/>
<rect x="751" y="501.5" width="10.5" height="10.1" fill="#999999"/>
<rect x="751" y="512.6" width="10.5" height="10.1" fill="#CCCCCC"/>
<rect x="751" y="523.7" width="10.5" height="10.1" fill="#FFFFFF"/>
<rect x="751" y="534.8" width="10.5" height="10.1" fill="#FF0000"/>
<rect x="751" y="545.9" width="10.5" height="10.1" fill="#008000"/>
<rect x="751" y="557.0" width="10.5" height="10.1" fill="#0000FF"/>
<rect x="751" y="568.1" width="10.5" height="10.1" fill="#FFFF00"/>
<rect x="751" y="579.2" width="10.5" height="10.1" fill="#00FFFF"/>
<rect x="751" y="590.3" width="10.5" height="10.1" fill="#800080"/>
<rect x="808.1" y="568.6" width="9.1" height="9.1" fill="none" stroke="#fff" stroke-width="1.6"/>
<rect x="751.8" y="502.3" width="8.9" height="8.5" fill="none" stroke="#fff" stroke-width="1.6"/>
<rect x="751.0" y="609.3" width="10.1" height="10" fill="#000000"/>
<rect x="762.1" y="609.3" width="10.1" height="10" fill="#111111"/>
<rect x="773.2" y="609.3" width="10.1" height="10" fill="#1c1c1c"/>
<rect x="784.3" y="609.3" width="10.1" height="10" fill="#222222"/>
<rect x="795.4" y="609.3" width="10.1" height="10" fill="#333333"/>
<rect x="806.5" y="609.3" width="10.1" height="10" fill="#3d3d3d"/>
<rect x="817.6" y="609.3" width="10.1" height="10" fill="#4d4d4d"/>
<rect x="828.7" y="609.3" width="10.1" height="10" fill="#5a5a5a"/>
<rect x="839.8" y="609.3" width="10.1" height="10" fill="#666666"/>
<rect x="850.9" y="609.3" width="10.1" height="10" fill="#777777"/>
<rect x="862.0" y="609.3" width="10.1" height="10" fill="#808080"/>
<rect x="873.1" y="609.3" width="10.1" height="10" fill="#8c8c8c"/>
<rect x="884.2" y="609.3" width="10.1" height="10" fill="#999999"/>
<rect x="895.3" y="609.3" width="10.1" height="10" fill="#a9a9a9"/>
<rect x="906.4" y="609.3" width="10.1" height="10" fill="#b3b3b3"/>
<rect x="917.5" y="609.3" width="10.1" height="10" fill="#c0c0c0"/>
<rect x="928.6" y="609.3" width="10.1" height="10" fill="#cccccc"/>
<rect x="939.7" y="609.3" width="10.1" height="10" fill="#dddddd"/>
<rect x="950.8" y="609.3" width="10.1" height="10" fill="#f0f0f0"/>
<rect x="961.9" y="609.3" width="10.1" height="10" fill="#ffffff"/><rect x="835.0" y="640" width="1" height="3" fill="#bbb"/><rect x="848.3" y="640" width="1" height="3" fill="#bbb"/><rect x="861.6" y="640" width="1" height="3" fill="#bbb"/><rect x="874.9" y="640" width="1" height="3" fill="#bbb"/><rect x="888.2" y="640" width="1" height="3" fill="#bbb"/><rect x="901.5" y="640" width="1" height="3" fill="#bbb"/><rect x="914.8" y="640" width="1" height="3" fill="#bbb"/><rect x="928.1" y="640" width="1" height="3" fill="#bbb"/><rect x="941.4" y="640" width="1" height="3" fill="#bbb"/><rect x="954.7" y="640" width="1" height="3" fill="#bbb"/><rect x="968.0" y="640" width="1" height="3" fill="#bbb"/>
 <rect x="835" y="629" width="134" height="1" fill="#c4c4c4"/>
 <defs><linearGradient id="thg" x1="0" y1="0" x2="0" y2="1"><stop offset="0" stop-color="#fdfdfd"/><stop offset="1" stop-color="#d8d8d8"/></linearGradient></defs><path d="M965.5 626 Q965.5 624 967.5 624 H972.5 Q974.5 624 974.5 626 V636 L970 640 L965.5 636 Z" fill="url(#thg)" stroke="#8a8a8a"/>
 <rect x="751" y="653" width="222" height="1" fill="#c8c8c8"/>
</svg>
<div class="t" style="left:751px;top:630.5px;font-size:10px;color:#222">不透明:</div>
<div class="inp" style="left:793px;top:626px;width:33px;height:19px;border-color:#b5b5b5"></div>
<div class="t" style="left:796px;top:631px;font-size:10.5px;color:#222;-webkit-text-stroke:0">100</div>
<div class="t" style="left:751px;top:661px;font-size:10px;color:#222">最近的选择</div>
<div class="t" style="left:875px;top:661px;font-size:10px;color:#222">最近的页面</div>

</body></html>
